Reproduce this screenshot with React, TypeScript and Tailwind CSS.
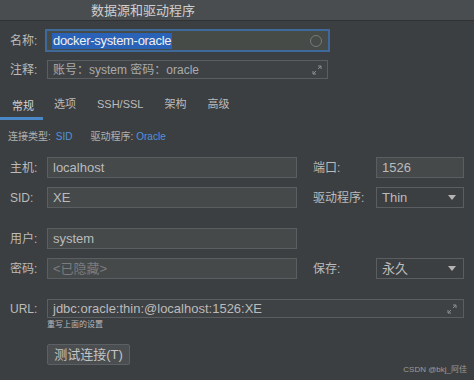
import React from "react";

const font = { fontFamily: '"Liberation Sans", "Noto Sans CJK SC", sans-serif' };

function ExpandIcon() {
  return (
    <svg width="10" height="10" viewBox="0 0 10 10" fill="none" stroke="#8c8f91" strokeWidth="1">
      <path d="M6 1h3v3M9 1L6 4M4 9H1V6M1 9l3-3" />
    </svg>
  );
}

function Caret() {
  return (
    <svg width="8" height="5" viewBox="0 0 8 5">
      <path d="M0 0h8L4 5z" fill="#b4b4b4" />
    </svg>
  );
}

function Label({ children, w }: { children: React.ReactNode; w: string }) {
  return <div className={`${w} shrink-0 text-[12px] text-[#bbbbbb] leading-none`}>{children}</div>;
}

function Field({ children, w, placeholder }: { children?: React.ReactNode; w: string; placeholder?: boolean }) {
  return (
    <div
      className={`${w} h-[21px] bg-[#45494a] border border-[#5b5e60] flex items-center px-[5px] text-[13px] leading-none ${
        placeholder ? "text-[#7a7c7e]" : "text-[#bbbbbb]"
      }`}
    >
      {children}
    </div>
  );
}

function Select({ value }: { value: string }) {
  return (
    <div className="w-[88px] h-[21px] bg-[#3c3f41] border border-[#5b5e60] flex items-center justify-between pl-[5px] pr-[7px] text-[13px] text-[#bbbbbb] leading-none">
      <span>{value}</span>
      <Caret />
    </div>
  );
}

export default function App() {
  return (
    <div className="w-[474px] h-[380px] bg-[#3c3f41] flex flex-col relative overflow-hidden" style={font}>
      {/* title bar */}
      <div className="h-[21px] shrink-0 bg-[#4a4d4f] border-b border-[#2f3133] flex items-center pl-[91px] text-[13px] text-[#d0d0d0] leading-none">
        数据源和驱动程序
      </div>

      {/* name */}
      <div className="flex items-center mt-[8px] pl-[10px]">
        <div className="w-[35px] text-[12px] text-[#bbbbbb] leading-none">名称:</div>
        <div className="w-[285px] h-[23px] border-2 border-[#3d6a9a] bg-[#464b48] flex items-center pl-[5px] pr-[6px] justify-between">
          <span className="bg-[#2a62b8] text-[#f0f0f0] text-[13px] tracking-[-0.3px] leading-[14px] px-[1px] py-[1px]">docker-system-oracle</span>
          <div className="w-[12px] h-[12px] rounded-full border border-[#77797b]" />
        </div>
      </div>

      {/* comment */}
      <div className="flex items-center mt-[8px] pl-[10px]">
        <div className="w-[37px] text-[12px] text-[#bbbbbb] leading-none">注释:</div>
        <div className="w-[281px] h-[19px] border border-[#5b5e60] bg-[#3f4244] flex items-center justify-between pl-[5px] pr-[5px] text-[12px] text-[#a9abad] leading-none">
          <span>账号：system 密码：oracle</span>
          <ExpandIcon />
        </div>
      </div>

      {/* tabs */}
      <div className="flex items-end mt-[13px] h-[28px] text-[11px] leading-none">
        <div className="h-full pl-[12px] pr-[9px] flex items-center border-b-[3px] border-[#4a88c7] text-[#d4d4d4] pt-[3px]">常规</div>
        <div className="flex gap-[21px] items-center h-full pl-[11px] pb-[3px] text-[#bbbbbb]">
          <span>选项</span>
          <span>SSH/SSL</span>
          <span>架构</span>
          <span>高级</span>
        </div>
      </div>

      {/* info line */}
      <div className="flex items-center mt-[12px] pl-[8px] text-[10px] leading-none text-[#b0b0b0]">
        <span>连接类型:</span>
        <span className="ml-[5px] text-[#4f93dc]">SID</span>
        <span className="ml-[18px]">驱动程序:</span>
        <span className="ml-[3px] text-[#4f93dc]">Oracle</span>
      </div>

      {/* host / port */}
      <div className="flex items-center mt-[15px] pl-[10px]">
        <Label w="w-[37px]">主机:</Label>
        <Field w="w-[250px]">localhost</Field>
        <div className="w-[16px]" />
        <Label w="w-[63px]">端口:</Label>
        <Field w="w-[88px]">1526</Field>
      </div>

      {/* SID / driver */}
      <div className="flex items-center mt-[9px] pl-[10px]">
        <Label w="w-[37px]">SID:</Label>
        <Field w="w-[250px]">XE</Field>
        <div className="w-[16px]" />
        <Label w="w-[63px]">驱动程序:</Label>
        <Select value="Thin" />
      </div>

      {/* user */}
      <div className="flex items-center mt-[20px] pl-[10px]">
        <Label w="w-[37px]">用户:</Label>
        <Field w="w-[250px]">system</Field>
      </div>

      {/* password / save */}
      <div className="flex items-center mt-[9px] pl-[10px]">
        <Label w="w-[37px]">密码:</Label>
        <Field w="w-[250px]" placeholder>&lt;已隐藏&gt;</Field>
        <div className="w-[16px]" />
        <Label w="w-[63px]">保存:</Label>
        <Select value="永久" />
      </div>

      {/* URL */}
      <div className="flex items-center mt-[20px] pl-[10px]">
        <Label w="w-[37px]">URL:</Label>
        <div className="w-[417px] h-[19px] bg-[#3f4244] border border-[#5b5e60] flex items-center justify-between pl-[5px] pr-[6px] text-[13px] text-[#bbbbbb] leading-none">
          <span>jdbc:oracle:thin:@localhost:1526:XE</span>
          <ExpandIcon />
        </div>
      </div>
      <div className="pl-[47px] mt-[3px] text-[8px] leading-none text-[#b8b8b8]">重写上面的设置</div>

      {/* button */}
      <div className="pl-[47px] mt-[15px]">
        <div className="w-[83px] h-[21px] bg-[#4a4e50] border border-[#5d6062] rounded-[2px] flex items-center justify-center text-[13px] text-[#c4c4c4] leading-none">
          测试连接(T)
        </div>
      </div>

      <div className="absolute right-[7px] bottom-[6px] text-[8px] leading-none text-[#9a9c9e]">CSDN @bkj_阿佳</div>
    </div>
  );
}
